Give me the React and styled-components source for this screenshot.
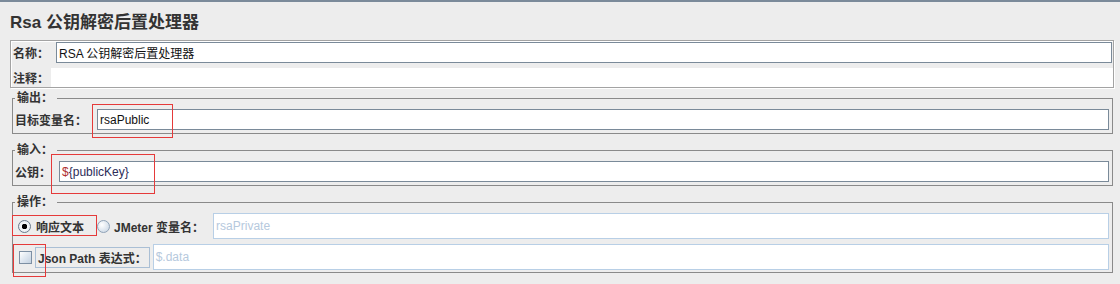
import React from "react";
import styled, { createGlobalStyle } from "styled-components";

const GlobalStyle = createGlobalStyle`
  html, body {
    margin: 0;
    padding: 0;
    background: #ededed;
  }
  body {
    font-family: "Liberation Sans", "Noto Sans CJK SC", sans-serif;
    font-size: 12px;
    color: #333;
  }
`;

const Page = styled.div`
  position: relative;
  width: 1120px;
  height: 284px;
  box-sizing: border-box;
  border-top: 2px solid #7b8a9a;
  background: #ededed;
  overflow: hidden;
`;

const Title = styled.h1`
  margin: 11px 0 8px 10px;
  font-size: 17px;
  line-height: 19px;
  font-weight: bold;
  color: #333;
`;

const NamePanel = styled.div`
  margin: 0 6px 0 10px;
  border: 1px solid #a3a3a3;
  box-shadow: inset 1px 1px 0 #fff, 1px 1px 0 #fff;
  padding: 1px 0 0 1px;
  display: flex;
  flex-direction: column;
  gap: 5px;
`;

const Row = styled.div`
  display: flex;
  align-items: center;
  height: ${(p) => p.$h || 21}px;
  padding-right: ${(p) => p.$pr || 0}px;
`;

const Label = styled.span`
  flex: none;
  margin-left: ${(p) => p.$ml || 0}px;
  margin-right: ${(p) => p.$mr || 0}px;
  font-weight: bold;
  font-size: 12px;
  color: #333;
  white-space: nowrap;
`;

const TextField = styled.div`
  flex: 1;
  align-self: stretch;
  box-sizing: border-box;
  display: flex;
  align-items: center;
  padding-left: 2px;
  background: #fff;
  border: 1px solid #7a8a99;
  font-size: 12px;
  color: #111;
  white-space: nowrap;
`;

const PlainField = styled.div`
  flex: 1;
  align-self: stretch;
  background: #fff;
`;

const DisabledField = styled(TextField)`
  border-color: #b8cfe6;
  color: #b6c9dd;
  margin-left: ${(p) => p.$ml || 0}px;
`;

const Group = styled.fieldset`
  margin: ${(p) => p.$top}px 7px 0 12px;
  padding: 3px 3px ${(p) => p.$bottom}px 2px;
  border: 1px solid #8a8a8a;
  min-width: 0;
  display: flex;
  flex-direction: column;
  gap: ${(p) => p.$gap || 0}px;
`;

const Legend = styled.legend`
  margin: 0;
  padding: 0 4px 0 2px;
  font-weight: bold;
  font-size: 12px;
  line-height: 15px;
  color: #333;
`;

const Radio = styled.span`
  flex: none;
  box-sizing: border-box;
  width: 13px;
  height: 13px;
  margin-left: ${(p) => p.$ml || 0}px;
  border-radius: 50%;
  border: 1px solid ${(p) => (p.$on ? "#6a7a8c" : "#8fa2b7")};
  background: ${(p) =>
    p.$on
      ? "radial-gradient(circle, #000 0 2.5px, #f4f6f8 3px, #dfe6ee 100%)"
      : "radial-gradient(circle at 35% 35%, #ffffff, #c9d6e4 90%)"};
`;

const RadioText = styled(Label)`
  margin-left: 5px;
`;

const CheckBox = styled.span`
  flex: none;
  box-sizing: border-box;
  width: 13px;
  height: 13px;
  margin-left: 4px;
  border: 1px solid #7d8fa3;
  background: linear-gradient(135deg, #ffffff 0%, #dfe7f0 50%, #c3d1e0 100%);
`;

const LabelButton = styled.span`
  flex: none;
  box-sizing: border-box;
  height: 21px;
  margin-left: 3px;
  padding: 0 2px;
  display: flex;
  align-items: center;
  border: 1px solid #aabfd5;
  font-weight: bold;
  font-size: 12px;
  color: #333;
  white-space: nowrap;
`;

const Dollar = styled.span`
  color: #b03030;
`;

const VarText = styled.span`
  color: #2c2c58;
`;

const RedMark = styled.div`
  position: absolute;
  box-sizing: border-box;
  border: 1px solid #e53a3a;
  pointer-events: none;
`;

const marks = [
  { left: 92, top: 102, width: 81, height: 34 },
  { left: 51, top: 152, width: 104, height: 40 },
  { left: 12, top: 213, width: 85, height: 21 },
  { left: 13, top: 242, width: 33, height: 33 },
];

const App = () => {
  return (
    <Page>
      <GlobalStyle />
      <Title>Rsa 公钥解密后置处理器</Title>

      <NamePanel>
        <Row $pr={1}>
          <Label $ml={1} $mr={7}>名称：</Label>
          <TextField>RSA 公钥解密后置处理器</TextField>
        </Row>
        <Row $h={19}>
          <Label $ml={1} $mr={2}>注释：</Label>
          <PlainField />
        </Row>
      </NamePanel>

      <Group $top={3} $bottom={3}>
        <Legend>输出：</Legend>
        <Row>
          <Label $mr={10}>目标变量名：</Label>
          <TextField>rsaPublic</TextField>
        </Row>
      </Group>

      <Group $top={9} $bottom={3}>
        <Legend>输入：</Legend>
        <Row>
          <Label $mr={8}>公钥：</Label>
          <TextField>
            <Dollar>$</Dollar>
            <VarText>{"{publicKey}"}</VarText>
          </TextField>
        </Row>
      </Group>

      <Group $top={9} $bottom={2} $gap={5}>
        <Legend>操作：</Legend>
        <Row $h={26}>
          <Radio $on $ml={3} />
          <RadioText>响应文本</RadioText>
          <Radio $ml={13} />
          <Label $ml={4} $mr={9}>JMeter 变量名：</Label>
          <DisabledField>rsaPrivate</DisabledField>
        </Row>
        <Row $h={26}>
          <CheckBox />
          <LabelButton>Json Path 表达式：</LabelButton>
          <DisabledField $ml={3}>$.data</DisabledField>
        </Row>
      </Group>

      {marks.map((m, i) => (
        <RedMark key={i} style={m} />
      ))}
    </Page>
  );
};

export default App;
